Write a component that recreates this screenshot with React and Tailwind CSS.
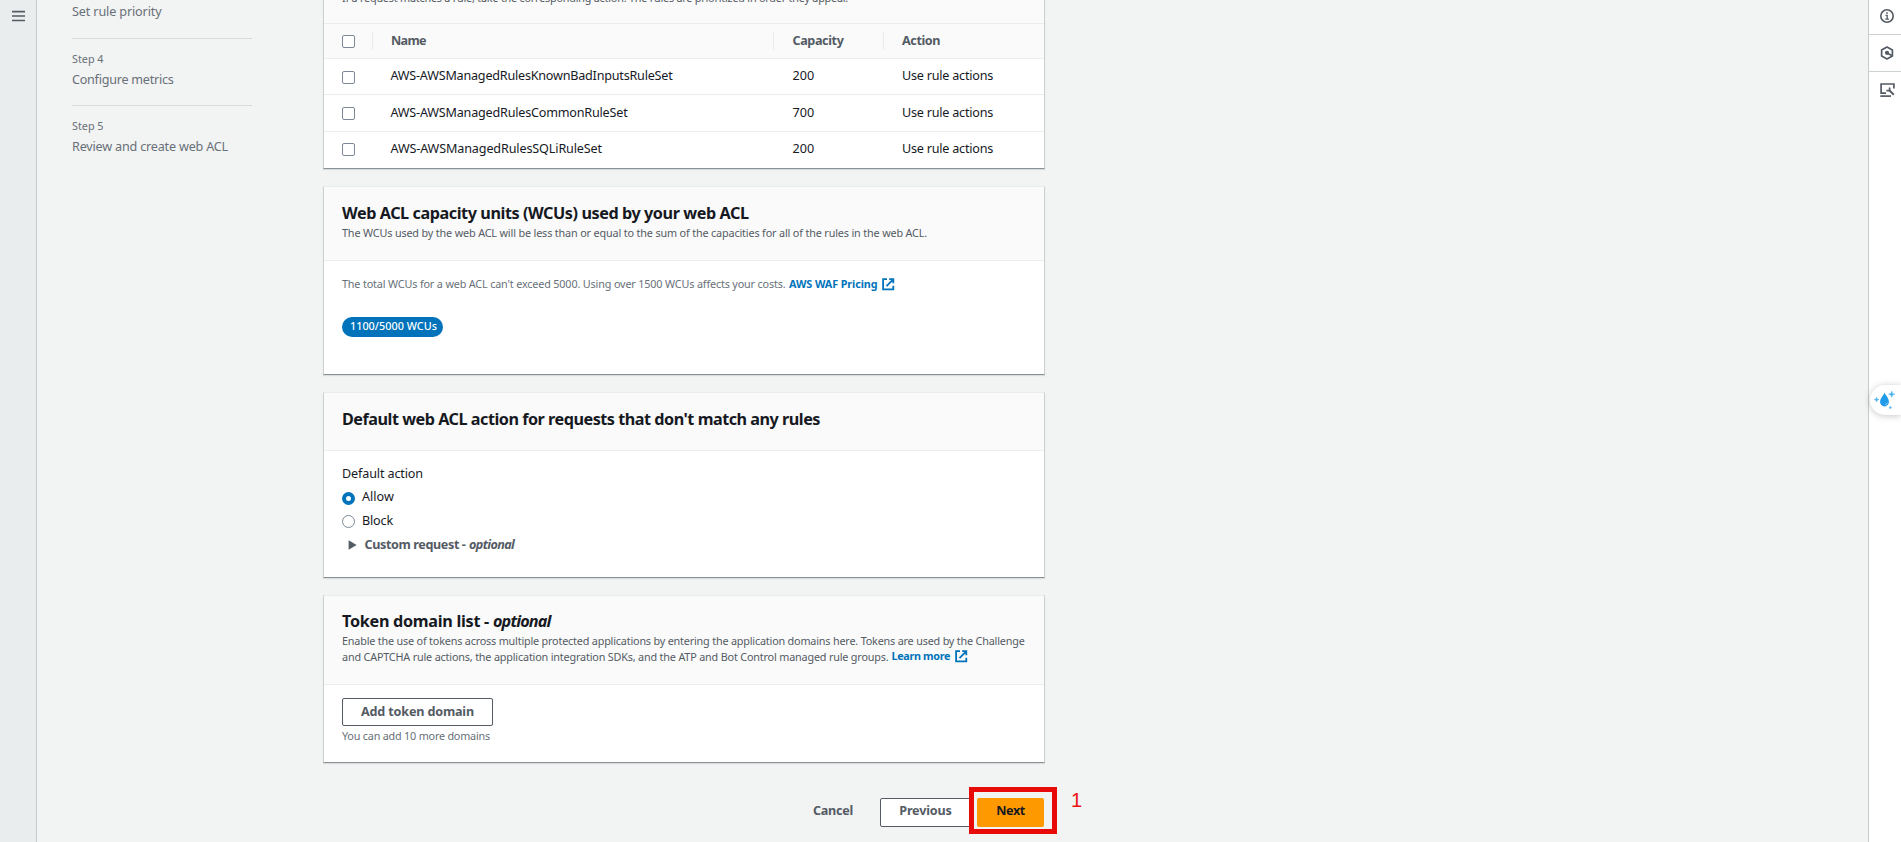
function ExternalIcon({ className = "" }) {
  return (
    <svg viewBox="0 0 13 13" className={`h-[13px] w-[13px] shrink-0 ${className}`} fill="none" stroke="#0073bb" strokeWidth="1.8">
      <path d="M5 1.2H1.1v10.2h10.2V7.8" />
      <path d="M7.2 1.2h4.1v4.1M11.2 1.4 4.5 8.1" />
    </svg>
  );
}

function Card({ className, header, children }) {
  return (
    <section
      className={`flex flex-col border-x border-t border-b border-x-[#ccd1d1] border-t-[#eaeded] border-b-[#879196] bg-white shadow-[0_1px_1px_0_rgba(0,28,36,0.1)] ${className}`}
    >
      {header}
      {children}
    </section>
  );
}

function Checkbox({ className }) {
  return <span className={`block h-[13px] w-[13px] shrink-0 rounded-[2px] border border-[#7d8998] bg-white ${className}`} />;
}

function Row({ name, nameClass, capacity, className, boxClass }) {
  return (
    <div className={`flex items-start pl-[18px] text-[#16191f] ${className}`}>
      <Checkbox className={boxClass} />
      <span className={`ml-[35.5px] w-[402px] ${nameClass}`}>{name}</span>
      <span className="w-[109.5px] tracking-[0.1px]">{capacity}</span>
      <span className="tracking-[-0.223px]">Use rule actions</span>
    </div>
  );
}

function RulesCard() {
  return (
    <Card className="h-[169px] border-t-0">
      <div className="flex h-6 shrink-0 items-start border-b border-[#eaeded] bg-[#fafafa] pl-[18px]">
        <p className="-mt-[10px] text-[10.8px] leading-4 tracking-[-0.204px] text-[#545b64]">
          If a request matches a rule, take the corresponding action. The rules are prioritized in order they appear.
        </p>
      </div>
      <div className="flex h-[35px] shrink-0 items-start border-b border-[#eaeded] bg-[#fafafa] pt-2 pl-[18px] font-bold text-[#545b64]">
        <Checkbox className="mt-[3px]" />
        <span className="ml-[17px] h-[18px] w-px bg-[#eaeded]" />
        <span className="ml-[18px] w-[382px] tracking-[-0.7px]">Name</span>
        <span className="h-[18px] w-px bg-[#eaeded]" />
        <span className="ml-[18.5px] w-[90.5px] tracking-[-0.382px]">Capacity</span>
        <span className="h-[18px] w-px bg-[#eaeded]" />
        <span className="ml-[18px] tracking-[-0.417px]">Action</span>
      </div>
      <Row name="AWS-AWSManagedRulesKnownBadInputsRuleSet" nameClass="tracking-[-0.216px]" capacity="200" className="h-9 border-b border-[#eaeded] pt-2" boxClass="mt-1" />
      <Row name="AWS-AWSManagedRulesCommonRuleSet" nameClass="tracking-[-0.2px]" capacity="700" className="h-[37px] border-b border-[#eaeded] pt-[9px]" boxClass="mt-[3px]" />
      <Row name="AWS-AWSManagedRulesSQLiRuleSet" nameClass="tracking-[-0.132px]" capacity="200" className="h-9 pt-2" boxClass="mt-[3px]" />
    </Card>
  );
}

function Sidebar() {
  return (
    <nav className="ml-[35px] w-[180px] shrink-0 text-[#687078]">
      <div className="h-[38px] pt-[3px] tracking-[-0.128px]">Set rule priority</div>
      <div className="h-[67px] border-t border-[#d5dbdb] pt-3">
        <div className="text-[10.8px] leading-4">Step 4</div>
        <div className="mt-1 tracking-[-0.25px]">Configure metrics</div>
      </div>
      <div className="border-t border-[#d5dbdb] pt-3">
        <div className="text-[10.8px] leading-4">Step 5</div>
        <div className="mt-1 tracking-[-0.187px]">Review and create web ACL</div>
      </div>
    </nav>
  );
}

function ToolRail() {
  return (
    <aside className="relative flex w-[33px] shrink-0 flex-col border-l border-[#c6cccc] bg-white">
      <div className="flex h-[35px] items-start border-b border-[#ccd1d1] pt-[9px] pl-[11px]">
        <svg viewBox="0 0 14 14" className="h-[14px] w-[14px]" fill="none" stroke="#545b64" strokeWidth="1.6">
          <circle cx="7" cy="7" r="6.2" />
          <path d="M5.5 6.4H7.2V10.2M5.3 10.2H8.9M6.2 4H7.8" strokeWidth="1.3" />
        </svg>
      </div>
      <div className="flex h-[37px] items-start border-b border-[#ccd1d1] pt-[11px] pl-[11px]">
        <svg viewBox="0 0 14 14" className="h-[14px] w-[14px]" fill="none" stroke="#545b64" strokeWidth="1.7">
          <path d="M7 1 12.4 4v6L7 13 1.6 10V4Z" strokeLinejoin="round" />
          <circle cx="7" cy="6.8" r="2.1" fill="#545b64" stroke="none" />
          <path d="M7.4 7.2 11.8 9.6" />
        </svg>
      </div>
      <div className="flex items-start pt-[11px] pl-[11px]">
        <svg viewBox="0 0 15 14" className="h-[14px] w-[15px]" fill="none" stroke="#545b64" strokeWidth="1.7">
          <path d="M6 10.2H1.1V1H13.9V5.6" />
          <path d="M0.3 13.1H11" />
          <path d="M9.4 7.4 13.8 11.8" strokeWidth="2" />
          <path d="M6.4 7.6H9.6V4.6" strokeWidth="1.7" />
        </svg>
      </div>
      <div className="absolute top-[385px] right-0 h-[30px] w-[31px] rounded-l-full bg-white shadow-[0_1px_7px_rgba(0,0,0,0.22)]">
        <svg viewBox="0 0 31 30" className="h-[30px] w-[31px]" fill="#1f9bea">
          <path d="M14.6 7.6C15.6 10.8 18.9 12.8 18.9 17A4.4 4.4 0 0 1 10.1 17C10.1 12.8 13.6 11 14.6 7.6Z" />
          <path d="M21.7 6.2 22.5 8.4 24.7 9.2 22.5 10 21.7 12.2 20.9 10 18.7 9.2 20.9 8.4Z" fill="#4db3ef" stroke="#4db3ef" strokeWidth=".6" />
          <path d="M6.6 12.4 7.2 14 8.8 14.6 7.2 15.2 6.6 16.8 6 15.2 4.4 14.6 6 14Z" fill="#4db3ef" stroke="#4db3ef" strokeWidth=".6" />
          <path d="M20.3 21.2 20.7 22.2 21.7 22.6 20.7 23 20.3 24 19.9 23 18.9 22.6 19.9 22.2Z" fill="#4db3ef" stroke="#4db3ef" strokeWidth=".5" />
          <path d="M15.2 19.6A2.4 2.4 0 0 0 17.2 17.6" fill="none" stroke="#8fd0f7" strokeWidth="1" />
        </svg>
      </div>
    </aside>
  );
}

export default function App() {
  return (
    <div className="flex h-[842px] w-[1901px] overflow-hidden whitespace-nowrap bg-[#f2f3f3] font-['Noto_Sans',sans-serif] text-[12.6px] leading-[18px] text-[#16191f]">
      <aside className="flex w-[37px] shrink-0 flex-col border-r border-[#c6cccc] bg-[#e9eded] pt-[10px] pl-3">
        <svg viewBox="0 0 13 12" className="h-3 w-[13px]" fill="none" stroke="#545b64" strokeWidth="1.6">
          <path d="M0 1.6H13M0 6H13M0 10.5H13" />
        </svg>
      </aside>

      <Sidebar />

      <main className="ml-[71px] flex w-[722px] shrink-0 flex-col">
        <RulesCard />

        <Card
          className="mt-[17px] h-[189px]"
          header={
            <header className="h-[74px] shrink-0 border-b border-[#eaeded] bg-[#fafafa] pt-4 pl-[18px]">
              <h2 className="text-[16.2px] leading-5 font-bold tracking-[-0.43px]">Web ACL capacity units (WCUs) used by your web ACL</h2>
              <p className="mt-0.5 text-[10.8px] leading-4 tracking-[-0.147px] text-[#545b64]">
                The WCUs used by the web ACL will be less than or equal to the sum of the capacities for all of the rules in the web ACL.
              </p>
            </header>
          }
        >
          <div className="flex flex-col items-start pt-[15px] pl-[18px] text-[10.8px] leading-4">
            <div className="flex">
              <span className="w-[447px] tracking-[-0.151px] text-[#687078]">
                The total WCUs for a web ACL can't exceed 5000. Using over 1500 WCUs affects your costs.
              </span>
              <a className="w-[93px] font-bold tracking-[-0.09px] text-[#0073bb]">AWS WAF Pricing</a>
              <ExternalIcon className="mt-0.5" />
            </div>
            <span className="mt-[25px] h-5 w-[101px] rounded-full bg-[#0073bb] pt-px pl-2 font-medium tracking-[0.03px] text-white">1100/5000 WCUs</span>
          </div>
        </Card>

        <Card
          className="mt-[17px] h-[186px]"
          header={
            <header className="h-[58px] shrink-0 border-b border-[#eaeded] bg-[#fafafa] pt-4 pl-[18px]">
              <h2 className="text-[16.2px] leading-5 font-bold tracking-[-0.483px]">
                Default web ACL action for requests that don't match any rules
              </h2>
            </header>
          }
        >
          <div className="pt-[14px] pl-[18px]">
            <div className="tracking-[-0.132px]">Default action</div>
            <div className="mt-[5px] flex items-start">
              <span className="mt-1 h-[13px] w-[13px] rounded-full border-4 border-[#0073bb] bg-white" />
              <span className="ml-[7px]">Allow</span>
            </div>
            <div className="mt-1.5 flex items-start">
              <span className="mt-[3px] h-[13px] w-[13px] rounded-full border border-[#7d8998] bg-white" />
              <span className="ml-[7px] tracking-[-0.165px]">Block</span>
            </div>
            <div className="mt-1.5 flex items-start pl-1.5 font-bold text-[#545b64]">
              <svg viewBox="0 0 9 10" className="mt-1 h-[10px] w-[9px]" fill="#545b64">
                <path d="M.6.2 8.6 5 .6 9.8Z" />
              </svg>
              <span className="ml-[7.5px] w-[104.5px] tracking-[-0.383px]">Custom request -</span>
              <em className="tracking-[-0.6px]">optional</em>
            </div>
          </div>
        </Card>

        <Card
          className="mt-[17px] h-[168px]"
          header={
            <header className="h-[89px] shrink-0 border-b border-[#eaeded] bg-[#fafafa] pt-[15px] pl-[18px]">
              <h2 className="flex text-[16.2px] leading-5 font-bold">
                <span className="w-[151px] tracking-[-0.282px]">Token domain list -</span>
                <em className="tracking-[-0.85px]">optional</em>
              </h2>
              <div className="mt-0.5 text-[10.8px] leading-4 text-[#545b64]">
                <p className="tracking-[-0.18px]">
                  Enable the use of tokens across multiple protected applications by entering the application domains here. Tokens are used by the Challenge
                </p>
                <div className="flex">
                  <p className="w-[549.5px] tracking-[-0.17px]">
                    and CAPTCHA rule actions, the application integration SDKs, and the ATP and Bot Control managed rule groups.
                  </p>
                  <a className="-mt-px w-[63.5px] font-bold tracking-[-0.343px] text-[#0073bb]">Learn more</a>
                  <ExternalIcon className="mt-px" />
                </div>
              </div>
            </header>
          }
        >
          <div className="flex flex-col items-start pt-[13px] pl-[18px]">
            <button className="h-7 w-[151px] rounded-[2px] border border-[#545b64] bg-white leading-[18px] font-bold tracking-[-0.165px] text-[#545b64]">
              Add token domain
            </button>
            <span className="mt-0.5 text-[10.8px] leading-4 tracking-[-0.197px] text-[#687078]">You can add 10 more domains</span>
          </div>
        </Card>

        <footer className="mt-[35px] flex items-start font-bold text-[#545b64]">
          <button className="mt-1 ml-[490px] w-[67px] text-left leading-[18px] tracking-[-0.264px]">Cancel</button>
          <button className="h-[29px] w-[91px] rounded-[2px] border border-[#545b64] bg-white pb-[3px] leading-[18px] tracking-[-0.163px]">Previous</button>
          <div className="relative ml-[6px]">
            <button className="block h-[29px] w-[67px] rounded-[2px] bg-[#ff9900] pb-[3px] leading-[18px] tracking-[-0.438px] text-[#16191f]">Next</button>
            <span className="absolute -top-[11px] -left-[8px] h-[47px] w-[88px] border-[5px] border-[#e80909]" />
            <span className="absolute -top-[12px] left-[94px] font-['Liberation_Sans',sans-serif] text-[20px] leading-[28px] font-normal text-[#ee1111]">1</span>
          </div>
        </footer>
      </main>

      <div className="grow" />
      <ToolRail />
    </div>
  );
}
